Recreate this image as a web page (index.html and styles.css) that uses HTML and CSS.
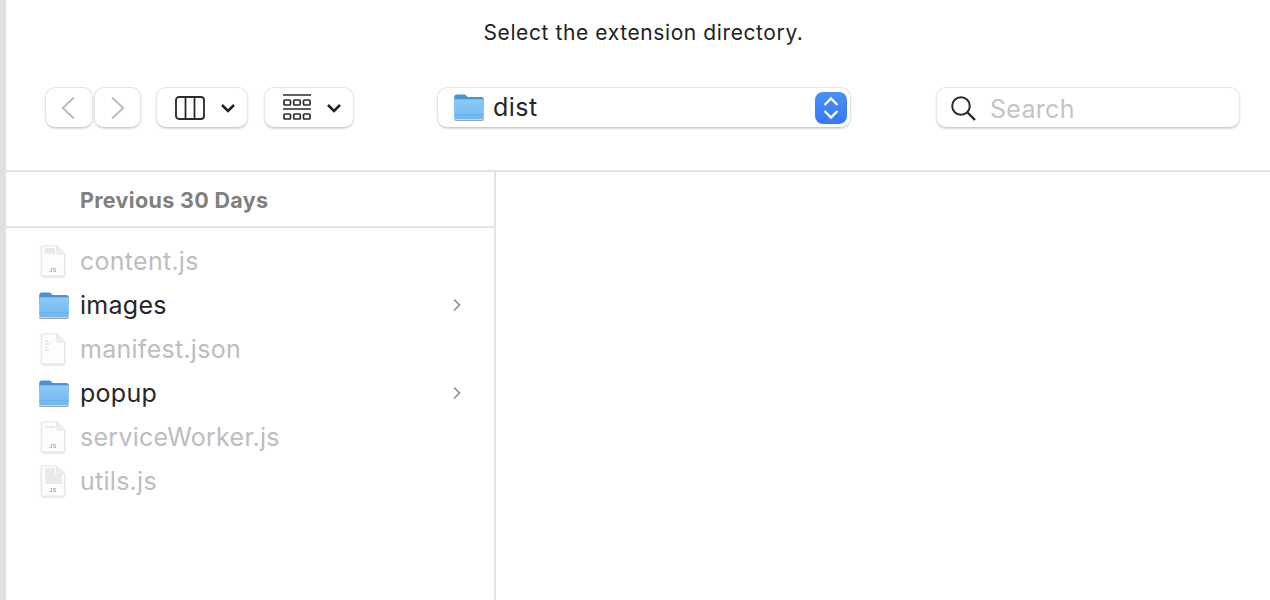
FILE: index.html
```html
<!DOCTYPE html>
<html lang="en">
<head>
<meta charset="utf-8">
<title>Select the extension directory.</title>
<link rel="stylesheet" href="styles.css">
</head>
<body>
<svg class="defs" width="0" height="0" aria-hidden="true">
  <defs>
    <linearGradient id="fold" x1="0" y1="0" x2="0" y2="1"><stop offset="0" stop-color="#8ccaf7"/><stop offset="1" stop-color="#70b8f1"/></linearGradient>
    <symbol id="folder" viewBox="1 2 28 25.500">
      <path d="M1 5.500C1 3.600 2 2.500 3.600 2.500h6.600c1.100 0 1.700.4 2.400 1.100l1.200 1.200h12.600c1.600 0 2.600 1 2.600 2.600V14H1z" fill="#4d92cf"/>
      <path d="M1 8.600c0-1 .7-1.600 1.600-1.600h24.800c.9 0 1.600.6 1.600 1.600v15.200c0 1.500-.9 2.400-2.400 2.400H3.400C1.900 26.200 1 25.300 1 23.800z" fill="url(#fold)"/>
      <path d="M1 21.500h28" stroke="#66ace4" stroke-width=".6"/>
      <path d="M1 25.600c.3.900 1.100 1.400 2.400 1.400h23.200c1.300 0 2.100-.5 2.400-1.400" fill="none" stroke="#9aa6b0" stroke-width="1"/>
    </symbol>
    <symbol id="doc" viewBox="0 0 28 32">
      <path d="M2.500 1h15l8 8v20.500a1.500 1.500 0 0 1-1.500 1.500H4a1.500 1.500 0 0 1-1.500-1.500z" fill="#fdfdfd" stroke="#e6e6e6"/>
      <path d="M17.500 1v6.500a1.500 1.500 0 0 0 1.500 1.500h6.500z" fill="#f0f0f0" stroke="#e6e6e6"/>
    </symbol>
  </defs>
</svg>
<div class="edge"></div>
<main class="dialog">
  <header class="top">
    <h1 class="title">Select the extension directory.</h1>
    <div class="toolbar">
      <div class="nav">
        <div class="btn nav-btn back-btn"><svg width="14" height="24" viewBox="0 0 14 24"><path d="M13 1.500 1.800 12 13 22.500" fill="none" stroke="#bcbcbc" stroke-width="2"/></svg></div>
        <div class="btn nav-btn"><svg width="14" height="24" viewBox="0 0 14 24"><path d="M1 1.500 12.200 12 1 22.500" fill="none" stroke="#bcbcbc" stroke-width="2"/></svg></div>
      </div>
      <div class="btn view-btn">
        <svg width="30" height="24" viewBox="0 0 30 24"><rect x="1" y="1" width="28" height="22" rx="3" fill="none" stroke="#2b2b2b" stroke-width="1.800"/><path d="M10.500 1v22M19.500 1v22" stroke="#2b2b2b" stroke-width="1.800"/></svg>
        <svg class="chev" width="16" height="10" viewBox="0 0 16 10"><path d="M2 2l6 6 6-6" fill="none" stroke="#222" stroke-width="2.600"/></svg>
      </div>
      <div class="btn group-btn">
        <svg width="28" height="28" viewBox="0 0 28 28">
          <path d="M0 1h28M0 15h28" stroke="#2b2b2b" stroke-width="1.700"/>
          <g fill="none" stroke="#2b2b2b" stroke-width="1.700">
            <rect x="1" y="6" width="6.500" height="5" rx="1"/><rect x="10.750" y="6" width="6.500" height="5" rx="1"/><rect x="20.500" y="6" width="6.500" height="5" rx="1"/>
            <rect x="1" y="20" width="6.500" height="5" rx="1"/><rect x="10.750" y="20" width="6.500" height="5" rx="1"/><rect x="20.500" y="20" width="6.500" height="5" rx="1"/>
          </g>
        </svg>
        <svg class="chev" width="16" height="10" viewBox="0 0 16 10"><path d="M2 2l6 6 6-6" fill="none" stroke="#222" stroke-width="2.600"/></svg>
      </div>
      <div class="btn path">
        <svg class="path-folder" width="30" height="27"><use href="#folder"/></svg>
        <span class="path-name">dist</span>
        <span class="stepper"><svg width="18" height="26" viewBox="0 0 18 26"><path d="M2.500 10 9 3.500 15.500 10M2.500 16 9 22.500 15.500 16" fill="none" stroke="#fff" stroke-width="2.300"/></svg></span>
      </div>
      <div class="btn search">
        <svg width="26" height="26" viewBox="0 0 26 26"><circle cx="11" cy="11" r="8.800" fill="none" stroke="#2b2b2b" stroke-width="2"/><path d="M17.500 17.500 25 25" stroke="#2b2b2b" stroke-width="2.400"/></svg>
        <span class="search-text">Search</span>
      </div>
    </div>
  </header>
  <div class="browser">
    <aside class="column">
      <div class="section">Previous 30 Days</div>
      <ul class="list">
        <li class="row off"><svg class="ico doc" width="28" height="32"><use href="#doc"/><path class="lines" d="M6 4h10M6 6h10M6 8h10"/><text class="js" x="14" y="27">JS</text></svg><span>content.js</span></li>
        <li class="row"><svg class="ico" width="30" height="27"><use href="#folder"/></svg><span>images</span><svg class="more" width="10" height="14" viewBox="0 0 10 14"><path d="M2 1.500 7.500 7 2 12.500" fill="none" stroke="#8a8a8a" stroke-width="1.600"/></svg></li>
        <li class="row off"><svg class="ico doc" width="28" height="32"><use href="#doc"/><path class="lines" d="M6 8h3M6 11h5M6 14h2M6 17h4"/></svg><span>manifest.json</span></li>
        <li class="row"><svg class="ico" width="30" height="27"><use href="#folder"/></svg><span>popup</span><svg class="more" width="10" height="14" viewBox="0 0 10 14"><path d="M2 1.500 7.500 7 2 12.500" fill="none" stroke="#8a8a8a" stroke-width="1.600"/></svg></li>
        <li class="row off"><svg class="ico doc" width="28" height="32"><use href="#doc"/><path class="lines" d="M6 6h10"/><text class="js" x="14" y="27">JS</text></svg><span>serviceWorker.js</span></li>
        <li class="row off"><svg class="ico doc" width="28" height="32"><use href="#doc"/><path class="lines" d="M6 4h10M6 6h10M6 8h10M6 10h17M6 12h17M6 14h17M6 16h17M6 18h17"/><text class="js" x="14" y="27">JS</text></svg><span>utils.js</span></li>
      </ul>
    </aside>
    <div class="detail"></div>
  </div>
</main>
</body>
</html>
```
FILE: styles.css
```css
* { box-sizing: border-box; }
html, body { height: 100%; }
body {
  margin: 0;
  display: flex;
  height: 600px;
  overflow: hidden;
  background: #fff;
  font-family: Inter, "Liberation Sans", sans-serif;
  color: #262626;
}
.defs { position: absolute; }
.edge { width: 6px; flex: none; background: #e3dfdc; }
.dialog { flex: 1; display: flex; flex-direction: column; min-width: 0; }
.top {
  height: 172px;
  flex: none;
  border-bottom: 2px solid #e4e4e4;
  display: flex;
  flex-direction: column;
}
.title {
  margin: 0;
  padding-top: 20px;
  height: 87px;
  padding-left: 11px;
  text-align: center;
  font-size: 21px;
  font-weight: 400;
  line-height: 26px;
  letter-spacing: .6px;
  color: #222;
}
.toolbar { display: flex; align-items: flex-start; padding-left: 39px; }
.btn {
  height: 41px;
  background: #fff;
  border-radius: 10px;
  border: 1px solid #e6e6e6;
  border-bottom-color: #cfcfcf;
  box-shadow: 0 1px 2px rgba(0, 0, 0, .14);
  display: flex;
  align-items: center;
}
.nav { display: flex; gap: 1px; }
.nav-btn { width: 47px; justify-content: center; }
.back-btn { width: 48px; padding-right: 3px; }
.view-btn { width: 92px; margin-left: 15px; padding-left: 18px; }
.view-btn .chev { margin-left: 15px; }
.group-btn { width: 90px; margin-left: 16px; padding-left: 18px; }
.group-btn .chev { margin-left: 15px; }
.path { width: 414px; margin-left: 83px; padding-left: 16px; padding-right: 3px; }
.path-name { margin-left: 9px; padding-bottom: 2px; font-size: 25px; letter-spacing: .5px; flex: 1; }
.stepper {
  width: 32px;
  height: 32px;
  border-radius: 8px;
  background: linear-gradient(#4a90f6, #3478f6);
  display: flex;
  align-items: center;
  justify-content: center;
}
.search { width: 304px; margin-left: 85px; padding-left: 13px; }
.search-text { margin-left: 14px; padding-top: 2px; font-size: 25px; letter-spacing: .3px; color: #c4c4c4; }
.browser { flex: 1; display: flex; min-height: 0; }
.column { width: 490px; flex: none; border-right: 2px solid #e4e4e4; }
.section {
  height: 56px;
  padding-left: 74px;
  padding-top: 2px;
  display: flex;
  align-items: center;
  border-bottom: 2px solid #e4e4e4;
  font-size: 21.500px;
  font-weight: 700;
  letter-spacing: .33px;
  color: #808080;
}
.list { list-style: none; margin: 0; padding: 11px 0 0; }
.row {
  height: 44px;
  position: relative;
  padding-left: 74px;
  display: flex;
  align-items: center;
  font-size: 25px;
  letter-spacing: .27px;
  color: #262626;
}
.row.off { color: #bdbdbd; }
.ico { position: absolute; left: 33px; top: 9px; overflow: visible; }
.row .doc { left: 33px; top: 6px; filter: drop-shadow(0 1px 1px rgba(0, 0, 0, .12)); }
.lines { stroke: #d6d6d6; stroke-width: 1; fill: none; }
.js { font-size: 6px; fill: #8a8a8a; text-anchor: middle; font-family: "Liberation Sans", sans-serif; }
.more { position: absolute; left: 446px; top: 15px; }
.detail { flex: 1; }
```
